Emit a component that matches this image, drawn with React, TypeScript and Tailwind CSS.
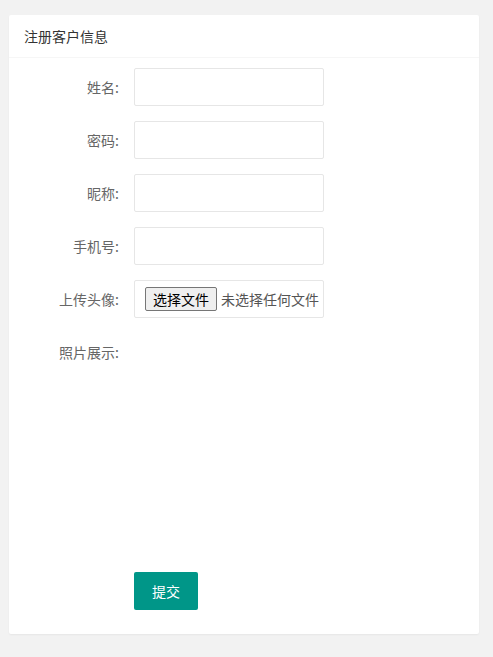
export default function App() {
  const fields = ['姓名', '密码', '昵称', '手机号']
  const font = { fontFamily: '"Microsoft YaHei", "Noto Sans CJK SC", "Noto Sans", sans-serif' }

  return (
    <div className="min-h-[657px] bg-[#f2f2f2] pt-[15px] pl-[9px] pr-[14px] pb-[23px]" style={font}>
      <div className="bg-white rounded-[2px] shadow-[0_1px_2px_0_rgba(0,0,0,0.05)]">
        <div className="h-[43px] leading-[42px] px-[15px] border-b border-[#f6f6f6] text-[14px] text-[#333]">
          注册客户信息
        </div>
        <div className="px-[15px] pt-[10px] pb-[9px]">
          {fields.map((f) => (
            <div key={f} className="flex mb-[15px]">
              <label className="w-[110px] shrink-0 py-[9px] pr-[15px] text-right text-[14px] leading-[20px] text-[#666]">{f}:</label>
              <input className="w-[190px] h-[38px] border border-[#e6e6e6] rounded-[2px] px-[10px] text-[14px] outline-none" />
            </div>
          ))}

          <div className="flex mb-[15px]">
            <label className="w-[110px] shrink-0 py-[9px] pr-[15px] text-right text-[14px] leading-[20px] text-[#666]">上传头像:</label>
            <div className="w-[190px] h-[38px] border border-[#e6e6e6] rounded-[2px] flex items-center pl-[10px] overflow-hidden whitespace-nowrap">
              <span className="h-[24px] px-[7px] border border-[#767676] bg-[#efefef] rounded-[2px] text-[14px] leading-[22px] text-black">选择文件</span>
              <span className="ml-[4px] text-[14px] text-[#555]">未选择任何文件</span>
            </div>
          </div>

          <div className="flex mb-[15px] h-[224px]">
            <label className="w-[110px] shrink-0 py-[9px] pr-[15px] text-right text-[14px] leading-[20px] text-[#666]">照片展示:</label>
            <div className="flex-1" />
          </div>

          <div className="flex mb-[15px]">
            <div className="w-[110px] shrink-0" />
            <button className="h-[38px] px-[18px] bg-[#009688] text-white text-[14px] rounded-[2px]">提交</button>
          </div>
        </div>
      </div>
    </div>
  )
}
